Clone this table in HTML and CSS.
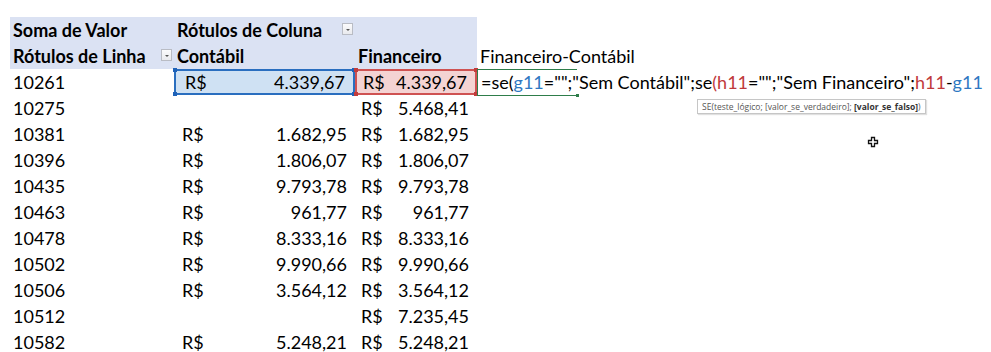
FILE: index.html
```html
<!DOCTYPE html>
<html lang="pt-BR">
<head>
<meta charset="utf-8">
<link rel="stylesheet" href="styles.css">
</head>
<body>
<div class="sheet">
  <div class="cell hdr a"><b>Soma de Valor</b></div>
  <div class="cell hdr b split"><b>Rótulos de Coluna</b><span class="dd"></span></div>
  <div class="cell hdr c"></div>
  <div class="cell d"></div>

  <div class="cell hdr a split"><b>Rótulos de Linha</b><span class="dd"></span></div>
  <div class="cell hdr b"><b>Contábil</b></div>
  <div class="cell hdr c"><b>Financeiro</b></div>
  <div class="cell d">Financeiro-Contábil</div>

  <div class="cell a">10261</div>
  <div class="cell b money sel-blue"><span>R$</span><span>4.339,67</span><i class="h tl"></i><i class="h tr"></i><i class="h bl"></i><i class="h br"></i></div>
  <div class="cell c money sel-red"><span>R$</span><span>4.339,67</span><i class="h tl"></i><i class="h tr"></i><i class="h bl"></i><i class="h br"></i></div>
  <div class="cell d formula-cell">
    <div class="edit-box"><i class="h gbr"></i></div>
    <div class="formula">=se(<span class="fb">g11</span>="";"Sem Contábil";se<span class="fr">(h11</span>="";"Sem Financeiro";<span class="fr">h11</span>-<span class="fb">g11</span></div>
    <div class="tip">SE(teste_lógico; [valor_se_verdadeiro]; <b>[valor_se_falso]</b>)</div>
  </div>

  <div class="cell a">10275</div>
  <div class="cell b money"></div>
  <div class="cell c money"><span>R$</span><span>5.468,41</span></div>
  <div class="cell d"></div>

  <div class="cell a">10381</div>
  <div class="cell b money"><span>R$</span><span>1.682,95</span></div>
  <div class="cell c money"><span>R$</span><span>1.682,95</span></div>
  <div class="cell d"></div>

  <div class="cell a">10396</div>
  <div class="cell b money"><span>R$</span><span>1.806,07</span></div>
  <div class="cell c money"><span>R$</span><span>1.806,07</span></div>
  <div class="cell d cursor-cell"><svg class="cursor" width="12" height="12" viewBox="0 0 12 12"><path d="M4.5 1.5h3v3h3v3h-3v3h-3v-3h-3v-3h3z" fill="#fff" stroke="#111" stroke-width="1.3"/></svg></div>

  <div class="cell a">10435</div>
  <div class="cell b money"><span>R$</span><span>9.793,78</span></div>
  <div class="cell c money"><span>R$</span><span>9.793,78</span></div>
  <div class="cell d"></div>

  <div class="cell a">10463</div>
  <div class="cell b money"><span>R$</span><span>961,77</span></div>
  <div class="cell c money"><span>R$</span><span>961,77</span></div>
  <div class="cell d"></div>

  <div class="cell a">10478</div>
  <div class="cell b money"><span>R$</span><span>8.333,16</span></div>
  <div class="cell c money"><span>R$</span><span>8.333,16</span></div>
  <div class="cell d"></div>

  <div class="cell a">10502</div>
  <div class="cell b money"><span>R$</span><span>9.990,66</span></div>
  <div class="cell c money"><span>R$</span><span>9.990,66</span></div>
  <div class="cell d"></div>

  <div class="cell a">10506</div>
  <div class="cell b money"><span>R$</span><span>3.564,12</span></div>
  <div class="cell c money"><span>R$</span><span>3.564,12</span></div>
  <div class="cell d"></div>

  <div class="cell a">10512</div>
  <div class="cell b money"></div>
  <div class="cell c money"><span>R$</span><span>7.235,45</span></div>
  <div class="cell d"></div>

  <div class="cell a">10582</div>
  <div class="cell b money"><span>R$</span><span>5.248,21</span></div>
  <div class="cell c money"><span>R$</span><span>5.248,21</span></div>
  <div class="cell d"></div>
</div>
</body>
</html>
```
FILE: styles.css
```css
html, body {
  margin: 0;
  padding: 0;
  background: #fff;
  overflow: hidden;
}
.sheet {
  display: grid;
  grid-template-columns: 164px 181px 122px 514px;
  grid-auto-rows: 26px;
  padding: 17px 0 0 10px;
  font-family: Lato, "Liberation Sans", sans-serif;
  font-size: 18px;
  color: #000;
}
.sheet b { font-weight: 700; }
.cell {
  position: relative;
  display: flex;
  align-items: flex-end;
  padding: 0 3px 2px 3px;
  box-sizing: border-box;
  white-space: nowrap;
  line-height: 21px;
}
.hdr { background: #dbe2f3; }
.split { justify-content: space-between; }
.dd {
  align-self: center;
  width: 9px;
  height: 10px;
  border: 1px solid #b9bcc4;
  background: linear-gradient(#fbfbfc, #e9eaee);
  position: relative;
  margin-right: -1px;
}
.dd::after {
  content: "";
  position: absolute;
  left: 3px;
  top: 5px;
  border-left: 2px solid transparent;
  border-right: 2px solid transparent;
  border-top: 2px solid #555;
}
.money { justify-content: space-between; padding-left: 8px; padding-right: 8px; }
.c.money { padding-left: 6px; padding-right: 8px; }
.sel-blue {
  background: #cfe1f3;
  border: 2px solid #2a6ebf;
  padding-left: 9px;
  padding-right: 8px;
  padding-bottom: 0;
}
.sel-red {
  background: #f4d3d3;
  border: 2px solid #cf5252;
  padding-left: 5px;
  padding-right: 7px;
  padding-bottom: 0;
}
.h {
  position: absolute;
  width: 4px;
  height: 4px;
}
.sel-blue .h { background: #1f62b8; }
.sel-red .h { background: #c23c3c; }
.tl { left: -3px; top: -3px; }
.tr { right: -3px; top: -3px; }
.bl { left: -3px; bottom: -3px; }
.br { right: -3px; bottom: -3px; }
.formula-cell { overflow: visible; padding-left: 4px; }
.edit-box {
  position: absolute;
  left: 0;
  top: 0;
  width: 100px;
  height: 27px;
  border: 1px solid #2e7d4a;
  border-right: none;
  box-sizing: border-box;
}
.h.gbr { background: #2e7d4a; right: -2px; bottom: -2px; width: 3px; height: 3px; }
.formula { position: relative; }
.fb { color: #2f78c2; }
.fr { color: #c0393b; }
.tip {
  position: absolute;
  left: 220px;
  top: 30px;
  height: 13px;
  padding: 0 4px;
  border: 1px solid #c6c6c6;
  background: #fff;
  box-shadow: 1px 1px 1px rgba(0,0,0,0.12);
  font-family: "Open Sans", "Noto Sans", sans-serif;
  font-size: 8.5px;
  line-height: 13px;
  color: #555;
}
.tip b { color: #333; }
.cursor-cell { align-items: center; }
.cursor {
  position: absolute;
  left: 390px;
  top: -11px;
}
```
